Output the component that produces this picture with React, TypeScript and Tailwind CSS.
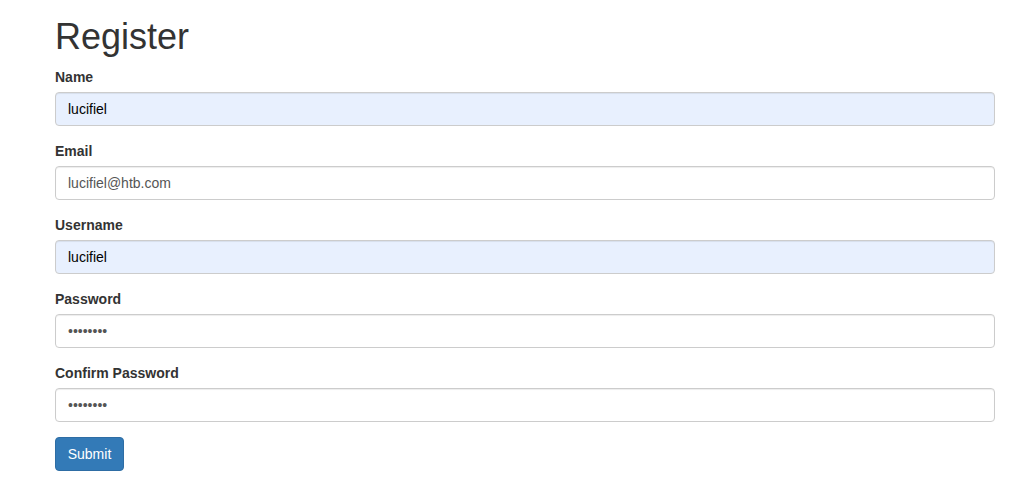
import React from "react";

const fields = [
  { label: "Name", type: "text", value: "lucifiel", autofill: true },
  { label: "Email", type: "email", value: "lucifiel@htb.com", autofill: false },
  { label: "Username", type: "text", value: "lucifiel", autofill: true },
  { label: "Password", type: "password", value: "lucifiel", autofill: false },
  { label: "Confirm Password", type: "password", value: "lucifiel", autofill: false },
];

export default function App() {
  return (
    <div className="min-h-screen bg-white font-['Liberation_Sans',Arial,sans-serif] text-[14px] leading-[20px] text-[#333]">
      <div className="ml-[55px] w-[940px] pt-[17px]">
        <h1 className="mb-[10px] text-[36px] font-normal leading-[39.6px] text-[#333]">Register</h1>
        <form onSubmit={(e) => e.preventDefault()}>
          {fields.map((f) => (
            <div key={f.label} className="mb-[15px]">
              <label className="mb-[5px] block font-bold">{f.label}</label>
              <input
                type={f.type}
                defaultValue={f.value}
                readOnly
                className={
                  "block h-[34px] w-full rounded-[4px] border border-[#ccc] px-[12px] py-[6px] text-[14px] leading-[20px] shadow-[inset_0_1px_1px_rgba(0,0,0,0.075)] outline-none " +
                  (f.autofill ? "bg-[#e8f0fe] text-black" : "bg-white text-[#555]")
                }
              />
            </div>
          ))}
          <button
            type="submit"
            className="h-[34px] w-[69px] rounded-[4px] border border-[#2e6da4] bg-[#337ab7] py-[6px] text-center text-[14px] leading-[20px] text-white"
          >
            Submit
          </button>
        </form>
      </div>
    </div>
  );
}
